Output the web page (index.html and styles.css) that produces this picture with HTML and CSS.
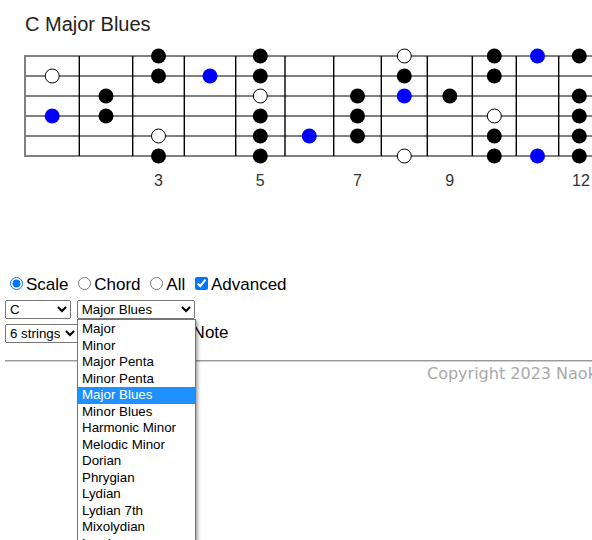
FILE: index.html
```html
<!DOCTYPE html>
<html lang="en">
<head>
<meta charset="utf-8">
<title>C Major Blues</title>
<link rel="stylesheet" href="styles.css">
</head>
<body>
<h1 class="title">C Major Blues</h1>
<svg class="board" width="700" height="232" viewBox="0 40 700 232" xmlns="http://www.w3.org/2000/svg">
  <g class="strings" stroke="#808080" stroke-width="2">
    <line x1="25" y1="56" x2="700" y2="56"/>
    <line x1="25" y1="76" x2="700" y2="76"/>
    <line x1="25" y1="96" x2="700" y2="96"/>
    <line x1="25" y1="116" x2="700" y2="116"/>
    <line x1="25" y1="136" x2="700" y2="136"/>
    <line x1="25" y1="156" x2="700" y2="156"/>
    <line x1="25" y1="55" x2="25" y2="157"/>
  </g>
  <g class="frets" stroke="#000" stroke-width="1.4">
    <line x1="79.3" y1="56" x2="79.3" y2="156"/>
    <line x1="132.7" y1="56" x2="132.7" y2="156"/>
    <line x1="184.3" y1="56" x2="184.3" y2="156"/>
    <line x1="235.7" y1="56" x2="235.7" y2="156"/>
    <line x1="285" y1="56" x2="285" y2="156"/>
    <line x1="333.7" y1="56" x2="333.7" y2="156"/>
    <line x1="381.3" y1="56" x2="381.3" y2="156"/>
    <line x1="427.3" y1="56" x2="427.3" y2="156"/>
    <line x1="472.3" y1="56" x2="472.3" y2="156"/>
    <line x1="516.3" y1="56" x2="516.3" y2="156"/>
    <line x1="558.7" y1="56" x2="558.7" y2="156"/>
    <line x1="600" y1="56" x2="600" y2="156"/>
    <line x1="640" y1="56" x2="640" y2="156"/>
    <line x1="679" y1="56" x2="679" y2="156"/>
  </g>
  <g class="dots">
    <!-- string 1 -->
    <circle cx="158.5" cy="56" r="7.5" fill="#000"/>
    <circle cx="260.3" cy="56" r="7.5" fill="#000"/>
    <circle cx="404.3" cy="56" r="7" fill="#fff" stroke="#000" stroke-width="1"/>
    <circle cx="494.3" cy="56" r="7.5" fill="#000"/>
    <circle cx="537.5" cy="56" r="7.5" fill="#0000ff"/>
    <circle cx="579.3" cy="56" r="7.5" fill="#000"/>
    <!-- string 2 -->
    <circle cx="52.2" cy="76" r="7" fill="#fff" stroke="#000" stroke-width="1"/>
    <circle cx="158.5" cy="76" r="7.5" fill="#000"/>
    <circle cx="210" cy="76" r="7.5" fill="#0000ff"/>
    <circle cx="260.3" cy="76" r="7.5" fill="#000"/>
    <circle cx="404.3" cy="76" r="7.5" fill="#000"/>
    <circle cx="494.3" cy="76" r="7.5" fill="#000"/>
    <!-- string 3 -->
    <circle cx="106" cy="96" r="7.5" fill="#000"/>
    <circle cx="260.3" cy="96" r="7" fill="#fff" stroke="#000" stroke-width="1"/>
    <circle cx="357.5" cy="96" r="7.5" fill="#000"/>
    <circle cx="404.3" cy="96" r="7.5" fill="#0000ff"/>
    <circle cx="449.8" cy="96" r="7.5" fill="#000"/>
    <circle cx="579.3" cy="96" r="7.5" fill="#000"/>
    <!-- string 4 -->
    <circle cx="52.2" cy="116" r="7.5" fill="#0000ff"/>
    <circle cx="106" cy="116" r="7.5" fill="#000"/>
    <circle cx="260.3" cy="116" r="7.5" fill="#000"/>
    <circle cx="357.5" cy="116" r="7.5" fill="#000"/>
    <circle cx="494.3" cy="116" r="7" fill="#fff" stroke="#000" stroke-width="1"/>
    <circle cx="579.3" cy="116" r="7.5" fill="#000"/>
    <!-- string 5 -->
    <circle cx="158.5" cy="136" r="7" fill="#fff" stroke="#000" stroke-width="1"/>
    <circle cx="260.3" cy="136" r="7.5" fill="#000"/>
    <circle cx="309.3" cy="136" r="7.5" fill="#0000ff"/>
    <circle cx="357.5" cy="136" r="7.5" fill="#000"/>
    <circle cx="494.3" cy="136" r="7.5" fill="#000"/>
    <circle cx="579.3" cy="136" r="7.5" fill="#000"/>
    <!-- string 6 -->
    <circle cx="158.5" cy="156" r="7.5" fill="#000"/>
    <circle cx="260.3" cy="156" r="7.5" fill="#000"/>
    <circle cx="404.3" cy="156" r="7" fill="#fff" stroke="#000" stroke-width="1"/>
    <circle cx="494.3" cy="156" r="7.5" fill="#000"/>
    <circle cx="537.5" cy="156" r="7.5" fill="#0000ff"/>
    <circle cx="579.3" cy="156" r="7.5" fill="#000"/>
  </g>
  <g class="nums" font-family="Liberation Sans, Arial, sans-serif" font-size="16" fill="#333" text-anchor="middle">
    <text x="158.5" y="186">3</text>
    <text x="260.3" y="186">5</text>
    <text x="357.5" y="186">7</text>
    <text x="449.8" y="186">9</text>
    <text x="581" y="186">12</text>
  </g>
</svg>
<div class="controls">
  <div class="row modes">
    <label><input type="radio" name="mode" checked>Scale</label>
    <label><input type="radio" name="mode">Chord</label>
    <label><input type="radio" name="mode">All</label>
    <label><input type="checkbox" checked>Advanced</label>
  </div>
  <div class="row pickers">
    <select class="sel sel-key">
      <option selected>C</option><option>C#</option><option>D</option><option>D#</option>
      <option>E</option><option>F</option><option>F#</option><option>G</option>
      <option>G#</option><option>A</option><option>A#</option><option>B</option>
    </select>
    <select class="sel sel-scale">
      <option>Major</option><option>Minor</option><option>Major Penta</option>
      <option>Minor Penta</option><option selected>Major Blues</option><option>Minor Blues</option>
      <option>Harmonic Minor</option><option>Melodic Minor</option><option>Dorian</option>
      <option>Phrygian</option><option>Lydian</option><option>Lydian 7th</option>
      <option>Mixolydian</option><option>Locrian</option>
    </select>
    <div class="popup">
      <div class="opt">Major</div>
      <div class="opt">Minor</div>
      <div class="opt">Major Penta</div>
      <div class="opt">Minor Penta</div>
      <div class="opt opt-active">Major Blues</div>
      <div class="opt">Minor Blues</div>
      <div class="opt">Harmonic Minor</div>
      <div class="opt">Melodic Minor</div>
      <div class="opt">Dorian</div>
      <div class="opt">Phrygian</div>
      <div class="opt">Lydian</div>
      <div class="opt">Lydian 7th</div>
      <div class="opt">Mixolydian</div>
      <div class="opt">Locrian</div>
      <div class="opt">Whole Tone</div>
    </div>
  </div>
  <div class="row tuning">
    <select class="sel sel-strings">
      <option selected>6 strings</option><option>7 strings</option><option>4 strings</option><option>5 strings</option>
    </select>
    <label><input type="checkbox">Show Root Note</label>
  </div>
</div>
<hr class="rule">
<div class="footer">Copyright 2023 Naoki</div>
</body>
</html>
```
FILE: styles.css
```css
html {
  overflow: hidden;
}
body {
  margin: 0;
  min-height: 540px;
  background: #fff;
  color: #000;
  font-family: "Liberation Sans", Arial, sans-serif;
}
.title {
  margin: 0 0 4px 0;
  padding: 13px 0 0 25px;
  font-size: 20px;
  line-height: 23px;
  font-weight: normal;
  color: #222;
}
.board {
  display: block;
}
.controls {
  position: relative;
  padding: 0 5px;
  font-size: 17px;
}
.row {
  white-space: nowrap;
}
.modes {
  height: 25px;
  line-height: 25px;
}
.pickers, .tuning {
  height: 24px;
  line-height: 24px;
}
.modes input, .tuning input {
  margin: 3px 3px 0 5px;
}
.sel {
  box-sizing: border-box;
  height: 19px;
  font-family: "Liberation Sans", Arial, sans-serif;
  font-size: 13.33px;
  color: #000;
  margin: 0;
}
.sel-key { width: 66px; }
.sel-scale { width: 118px; margin-left: 1px; }
.sel-strings { width: 74px; }
.popup {
  position: absolute;
  left: 77px;
  top: 47px;
  width: 119px;
  height: 221px;
  overflow: hidden;
  box-sizing: border-box;
  border: 1px solid #767676;
  border-bottom: 0;
  background: #fff;
  padding-top: 1px;
  box-shadow: 2px 2px 3px rgba(0, 0, 0, 0.35);
  font-family: "Liberation Sans", Arial, sans-serif;
  font-size: 13.33px;
  line-height: 16.5px;
  z-index: 2;
}
.opt {
  height: 16.5px;
  padding-left: 4px;
  color: #000;
}
.opt-active {
  background: #1e90ff;
  color: #fff;
}
.rule {
  margin: 15px 0 0 5px;
  height: 0;
  border: none;
  border-top: 1px solid #9a9a9a;
  border-bottom: 1px solid #d0d0d0;
}
.footer {
  margin-top: 2px;
  padding-left: 427px;
  white-space: nowrap;
  font-family: "DejaVu Sans", Verdana, sans-serif;
  font-size: 16px;
  color: #a9a9a9;
}
```
